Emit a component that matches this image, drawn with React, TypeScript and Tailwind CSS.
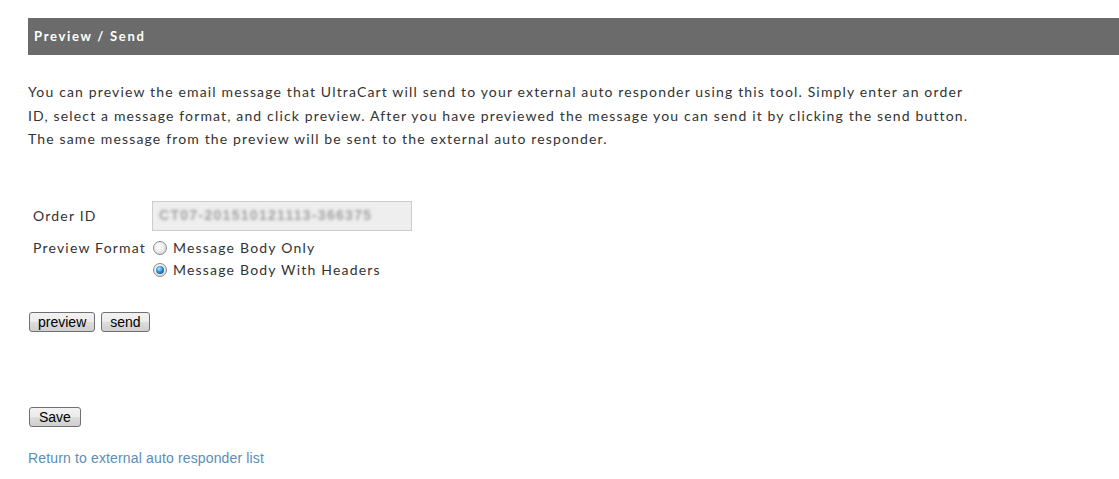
const lato = "font-['Lato','Open_Sans',sans-serif]";
const arial = "font-['Liberation_Sans',Arial,sans-serif]";

function Radio({ checked }: { checked?: boolean }) {
  return (
    <span className="relative inline-flex h-[14px] w-[14px] shrink-0 items-center justify-center rounded-full border border-[#8a8a8a] bg-[radial-gradient(circle_at_40%_35%,#ffffff_0%,#e8e8e8_55%,#c6c6c6_100%)]">
      {checked && (
        <span className="h-[8px] w-[8px] rounded-full bg-[radial-gradient(circle_at_40%_35%,#c4e8ff_0%,#2a8fd8_45%,#0b3a70_100%)]" />
      )}
    </span>
  );
}

function Btn({ children, className = "" }: { children: React.ReactNode; className?: string }) {
  return (
    <button
      className={`h-[20px] rounded-[3px] border border-[#707070] bg-[linear-gradient(#f2f2f2,#ebebeb_50%,#dddddd_50%,#cfcfcf)] px-[8px] text-[14px] leading-none text-black ${arial} ${className}`}
    >
      {children}
    </button>
  );
}

export default function App() {
  return (
    <div className={`min-h-screen bg-white pt-[18px] pl-[28px] text-[#333] ${lato}`}>
      <div className="flex h-[37px] items-center bg-[#6b6b6b] px-[6px]">
        <h2 className="text-[13px] font-bold tracking-[1.7px] text-white">Preview / Send</h2>
      </div>

      <p className="mt-[25px] w-[950px] text-[14px] leading-[23.5px] tracking-[1.15px] text-[#333]">
        You can preview the email message that UltraCart will send to your external auto responder using this
        tool. Simply enter an order ID, select a message format, and click preview. After you have previewed the
        message you can send it by clicking the send button. The same message from the preview will be sent to the
        external auto responder.
      </p>

      <div className="mt-[50px] grid grid-cols-[124px_auto] items-start gap-y-[6px] text-[14px] tracking-[1.2px]">
        <div className="flex h-[30px] items-center pl-[5px]">Order ID</div>
        <div className="flex h-[30px] w-[260px] items-center overflow-hidden border border-[#cccccc] bg-[#eeeeee] px-[6px]">
          <span className={`text-[14px] font-bold tracking-[1.3px] text-[#a3a3a3] blur-[1.4px] ${arial}`}>
            CT07-201510121113-366375
          </span>
        </div>

        <div className="flex h-[22px] items-center pl-[5px]">Preview Format</div>
        <div className="flex flex-col">
          <label className="flex h-[22px] items-center gap-[6px] pl-[1px]">
            <Radio />
            <span>Message Body Only</span>
          </label>
          <label className="flex h-[22px] items-center gap-[6px] pl-[1px]">
            <Radio checked />
            <span>Message Body With Headers</span>
          </label>
        </div>
      </div>

      <div className="mt-[31px] flex gap-[6px] pl-[1px]">
        <Btn>preview</Btn>
        <Btn>send</Btn>
      </div>

      <div className="mt-[72px] pl-[1px]">
        <Btn className="px-[9px]">Save</Btn>
      </div>

      <a href="#" className={`mt-[20px] inline-block text-[14px] tracking-[0.15px] text-[#5a8db8] ${arial}`}>
        Return to external auto responder list
      </a>
    </div>
  );
}
